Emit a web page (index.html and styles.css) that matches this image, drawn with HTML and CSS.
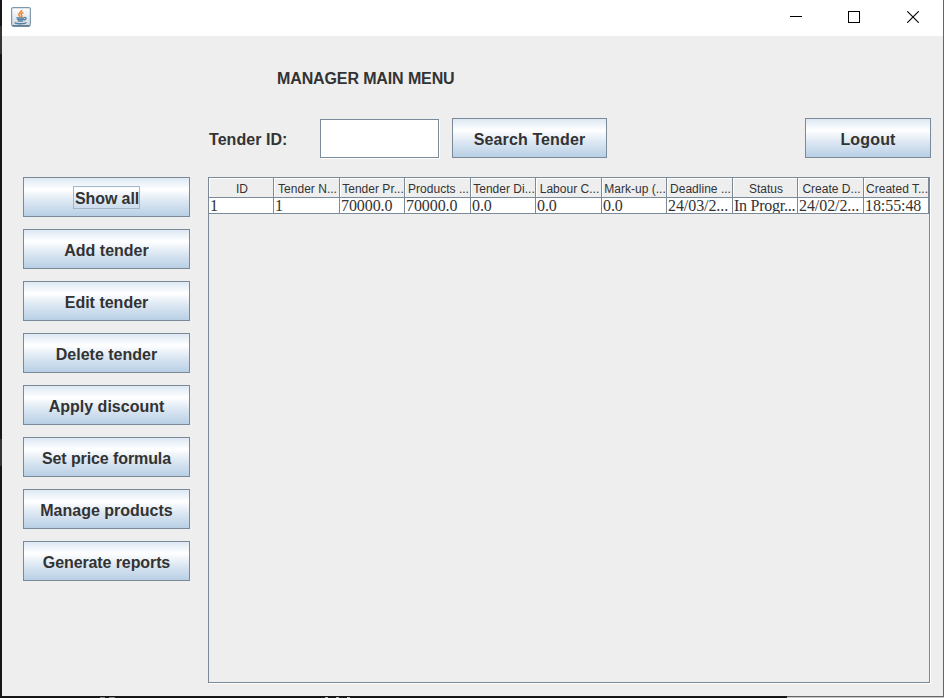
FILE: index.html
```html
<!DOCTYPE html>
<html lang="en">
<head>
<meta charset="utf-8">
<title>Manager Main Menu</title>
<link rel="stylesheet" href="styles.css">
</head>
<body>
<div class="desktop">
<div class="window">
  <header class="titlebar">
    <svg class="app-icon" width="20" height="20" viewBox="0 0 20 20">
      <defs><linearGradient id="tile" x1="0" y1="0" x2="0" y2="1"><stop offset="0" stop-color="#ffffff"/><stop offset="1" stop-color="#cfd9e1"/></linearGradient></defs>
      <rect x=".6" y=".6" width="18.8" height="18.3" rx="1.6" fill="url(#tile)" stroke="#8199ac" stroke-width="1.2"/>
      <path d="M1.500 19H18.500" stroke="#456a88" stroke-width="1.300"/>
      <path d="M10.600 3c.8 2-3.600 3-2.700 5 .3.800 1 1.200 1.200 2M12.400 5.500c-2.400 1-2.700 1.800-1.700 3 .4.600.2 1.100-.5 1.600" fill="none" stroke="#f08a35" stroke-width="1.600"/>
      <path d="M5.300 10.800h8.200M6 12.400h7M6.800 14h5.400M13.300 10.500c2.800-.4 2.200 2.200-.4 2.500M3.800 15.500c1.400 1.700 10 1.600 11.700 0" fill="none" stroke="#557f9f" stroke-width="1.300"/>
    </svg>
    <div class="controls">
      <svg width="12" height="12" viewBox="0 0 12 12" shape-rendering="crispEdges"><path d="M0 5.500H12" stroke="#000"/></svg>
      <svg width="12" height="12" viewBox="0 0 12 12" shape-rendering="crispEdges"><rect x=".5" y=".5" width="11" height="11" fill="none" stroke="#000"/></svg>
      <svg width="12" height="12" viewBox="0 0 12 12"><path d="M.2.2L11.800 11.800M11.800.2L.2 11.800" stroke="#000" stroke-width="1.100"/></svg>
    </div>
  </header>
  <main class="content">
    <h1>MANAGER MAIN MENU</h1>
    <div class="search-row">
      <label for="tender-id">Tender ID:</label>
      <input id="tender-id" class="field" type="text">
      <button class="btn search">Search Tender</button>
      <button class="btn logout">Logout</button>
    </div>
    <div class="main-row">
      <nav class="menu">
        <button class="btn"><span class="focus">Show all</span></button>
        <button class="btn">Add tender</button>
        <button class="btn">Edit tender</button>
        <button class="btn">Delete tender</button>
        <button class="btn">Apply discount</button>
        <button class="btn snug">Set price formula</button>
        <button class="btn">Manage products</button>
        <button class="btn snug">Generate reports</button>
      </nav>
      <section class="pane">
        <div class="grid head">
          <span>ID</span><span>Tender N...</span><span>Tender Pr...</span><span>Products ...</span><span>Tender Di...</span><span>Labour C...</span><span>Mark-up (...</span><span>Deadline ...</span><span>Status</span><span>Create D...</span><span>Created T...</span>
        </div>
        <div class="grid row">
          <span>1</span><span>1</span><span>70000.0</span><span>70000.0</span><span>0.0</span><span>0.0</span><span>0.0</span><span>24/03/2...</span><span class="tight">In Progr...</span><span>24/02/2...</span><span>18:55:48</span>
        </div>
      </section>
    </div>
  </main>
</div>
</div>
</body>
</html>
```
FILE: styles.css
```css
* { box-sizing: border-box; }
body { margin: 0; font-family: "Liberation Sans", Arial, sans-serif; color: #333; }
.desktop {
  width: 944px; height: 698px; padding: 0 1px 2px 2px; overflow: hidden;
  background:
    linear-gradient(#666, #666) 943px 0 / 1px 697px no-repeat,
    linear-gradient(#666, #666) 787px 696px / 157px 1px no-repeat,
    linear-gradient(#c9c5c5, #c9c5c5) 787px 697px / 157px 1px no-repeat,
    linear-gradient(#343431, #343431) 0 26px / 2px 28px no-repeat,
    linear-gradient(#343431, #343431) 0 439px / 2px 27px no-repeat,
    linear-gradient(#8a8583, #8a8583) 100px 697px / 5px 1px no-repeat,
    linear-gradient(#8a8583, #8a8583) 109px 697px / 6px 1px no-repeat,
    linear-gradient(#b5bcc0, #b5bcc0) 325px 697px / 3px 1px no-repeat,
    linear-gradient(#b5bcc0, #b5bcc0) 336px 697px / 3px 1px no-repeat,
    linear-gradient(#b5bcc0, #b5bcc0) 347px 697px / 3px 1px no-repeat,
    #171517;
}
.window { height: 696px; background: #eee; display: flex; flex-direction: column; }
.titlebar {
  height: 36px; background: #fff; display: flex; justify-content: space-between;
  align-items: flex-start; padding: 7px 24px 0 9px;
}
.controls { display: flex; gap: 46px; padding-top: 4px; }
.controls svg, .app-icon { display: block; }
.controls svg:last-child { margin-left: 1px; }
.content { flex: 1; display: flex; flex-direction: column; }
h1 { margin: 33px 0 0 275px; font-size: 16px; line-height: 20px; height: 20px; font-weight: bold; white-space: nowrap; letter-spacing: -.12px; }
.search-row { display: flex; margin-top: 29px; height: 40px; padding-left: 207px; padding-right: 12px; }
label { width: 111px; padding-top: 2px; font-size: 16px; font-weight: bold; line-height: 40px; letter-spacing: .05px; }
.field {
  width: 119px; height: 39px; margin-top: 1px; border: 1px solid #7a8a99; background: #fff;
  box-shadow: 1px 1px 0 #fff; outline: none; font-size: 16px; border-radius: 0;
}
.btn {
  display: flex; align-items: center; justify-content: center; padding: 4px 0 0; height: 40px;
  border: 1px solid #7a8a99; border-radius: 0; white-space: nowrap;
  background: linear-gradient(#dde8f3 0, #fff 30%, #dde8f3 60%, #b8cfe5 100%);
  font: bold 16px/20px "Liberation Sans", Arial, sans-serif; color: #333;
}
.search { width: 155px; margin-left: 13px; letter-spacing: .12px; }
.logout { width: 126px; margin-left: auto; letter-spacing: .15px; }
.snug { letter-spacing: -.1px; }
.main-row { display: flex; margin-top: 19px; padding-left: 21px; gap: 18px; }
.menu { display: flex; flex-direction: column; gap: 12px; width: 167px; }
.focus { border: 1px solid #a3b8cc; padding: 0 1px; height: 23px; line-height: 23px; margin-top: -3px; width: 67px; letter-spacing: -.1px; }
.pane { width: 722px; height: 506px; border: 1px solid #7a8a99; box-shadow: 1px 1px 0 #fff; overflow: hidden; }
.grid { display: grid; grid-template-columns: 65px 66px 65px 66px 65px 66px 65px 66px 65px 66px 65px; }
.grid span { white-space: nowrap; overflow: hidden; border-right: 1px solid #7a8a99; border-bottom: 1px solid #7a8a99; }
.head span { height: 20px; font-size: 12px; line-height: 22px; text-align: center; padding-left: 2px; box-shadow: inset 1px 1px 0 #fff; letter-spacing: .02px; }
.row span { height: 16px; background: #fff; padding-left: 1px; font: 16px/16px "Liberation Serif", "Times New Roman", serif; letter-spacing: -.08px; }
.row .tight { letter-spacing: -.25px; }
```
